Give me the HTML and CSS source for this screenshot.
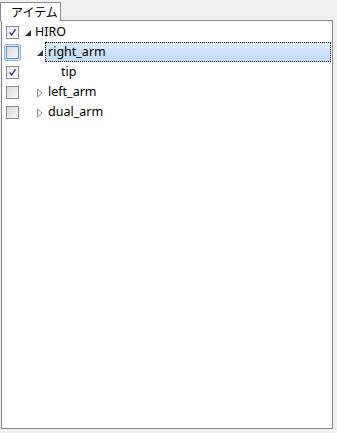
FILE: index.html
```html
<!DOCTYPE html>
<html>
  <head>
  <meta charset="UTF-8">
  <title>アイテム</title>
  <link rel="stylesheet" href="styles.css">
  </head>
  <body>
    <div class="tabs">
      <div class="tab">アイテム</div>
    </div>
    <div class="panel">
      <div class="row">
        <span class="check checked"><svg viewBox="0 0 13 13"><path d="M3 6.5 L5.5 9.5 L10 2.5" fill="none" stroke="#2a3f8f" stroke-width="1.6"/></svg></span>
        <span class="toggle"><svg viewBox="0 0 12 13"><path d="M11 4 L11 10 L5 10 Z" fill="#333"/></svg></span>
        <span class="label">HIRO</span>
      </div>
      <div class="row">
        <span class="check hover"></span>
        <span class="indent"></span>
        <span class="toggle"><svg viewBox="0 0 12 13"><path d="M10 4 L10 10 L4 10 Z" fill="#333"/></svg></span>
        <span class="label selected">right_arm</span>
      </div>
      <div class="row">
        <span class="check checked"><svg viewBox="0 0 13 13"><path d="M3 6.5 L5.5 9.5 L10 2.5" fill="none" stroke="#2a3f8f" stroke-width="1.6"/></svg></span>
        <span class="indent"></span>
        <span class="indent"></span>
        <span class="toggle"></span>
        <span class="label">tip</span>
      </div>
      <div class="row">
        <span class="check"></span>
        <span class="indent"></span>
        <span class="toggle"><svg viewBox="0 0 12 13"><path d="M4.5 3 L9 7 L4.5 11 Z" fill="none" stroke="#8a8a8a"/></svg></span>
        <span class="label">left_arm</span>
      </div>
      <div class="row">
        <span class="check"></span>
        <span class="indent"></span>
        <span class="toggle"><svg viewBox="0 0 12 13"><path d="M4.5 3 L9 7 L4.5 11 Z" fill="none" stroke="#8a8a8a"/></svg></span>
        <span class="label">dual_arm</span>
      </div>
    </div>
  </body>
</html>
```
FILE: styles.css
```css
body {
    margin: 0;
    background: #f0f0f0;
    font: 12.5px "Noto Sans", "Noto Sans CJK JP", sans-serif;
    color: #000;
}

.tabs {
    display: flex;
    padding-top: 1px;
    height: 19px;
}

.tab {
    background: #fff;
    border: 1px solid #898c95;
    border-bottom: none;
    width: 61px;
    padding-left: 10px;
    box-sizing: border-box;
    font-size: 12px;
    line-height: 20px;
    position: relative;
    top: 1px;
    z-index: 1;
}

.panel {
    margin: 0 4px 4px 1px;
    height: 409px;
    box-sizing: border-box;
    background: #fff;
    border: 1px solid #828790;
    padding: 1px 1px 0 4px;
}

.row {
    display: flex;
    align-items: center;
    height: 20px;
}

.check {
    width: 13px;
    height: 13px;
    box-sizing: border-box;
    border: 1px solid #8f8f8f;
    background: linear-gradient(135deg, #dcdcdc, #f8f8f8);
    flex: none;
    margin: 1px 1px 0 0;
}

.check svg {
    display: block;
    width: 11px;
    height: 11px;
}

.check.checked {
    background: linear-gradient(135deg, #e8e8e8, #fdfdfd);
}

.check.hover {
    border-color: #5c93c8;
    box-shadow: 0 0 0 1px #d6e6f6, 0 0 0 2px #9cc0e4;
    border-radius: 1px;
}

.indent {
    width: 13px;
    flex: none;
}

.toggle {
    width: 12px;
    height: 13px;
    flex: none;
}

.toggle svg {
    display: block;
    width: 12px;
    height: 13px;
}

.label {
    padding: 0 2px;
    line-height: 18px;
    border: 1px solid transparent;
}

.label.selected {
    flex: 1;
    border: 1px dotted #000;
    background: linear-gradient(#dcebfc, #c1dbfc);
}
```
